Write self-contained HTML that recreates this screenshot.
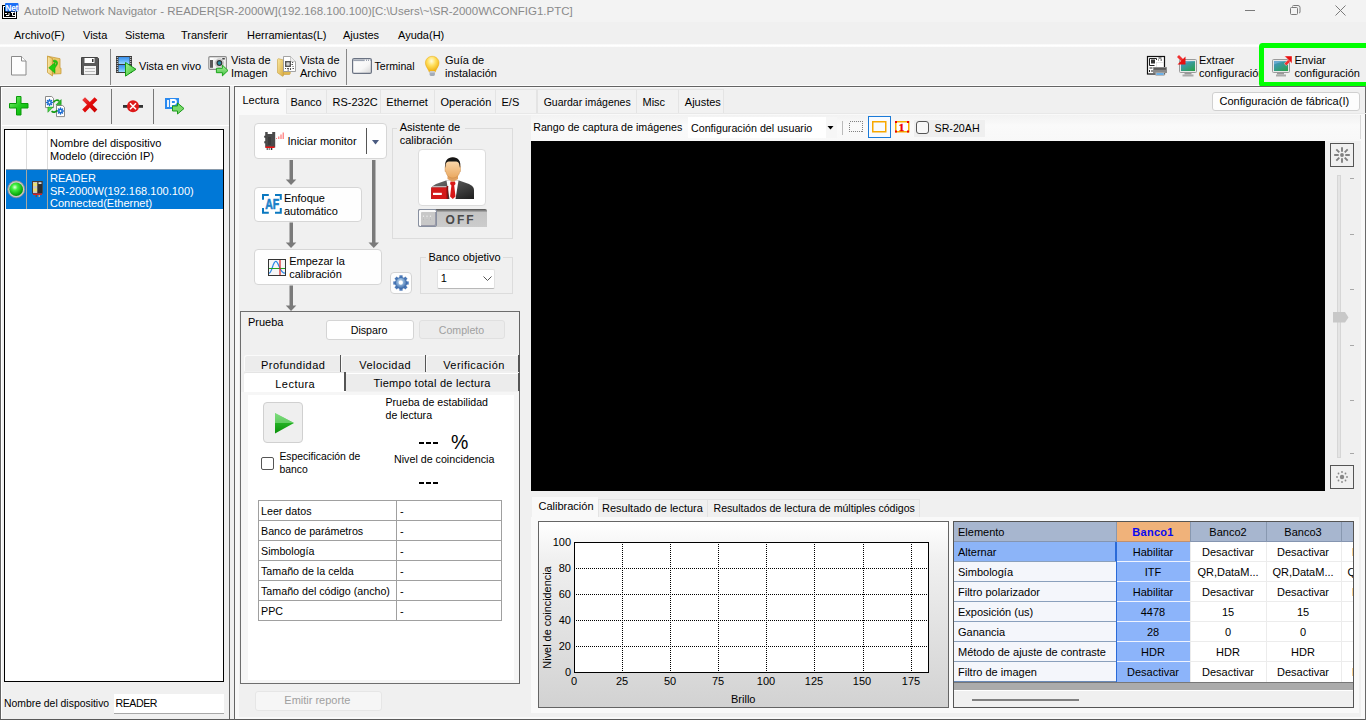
<!DOCTYPE html>
<html><head><meta charset="utf-8">
<style>
*{box-sizing:border-box;margin:0;padding:0}
html,body{width:1366px;height:720px;overflow:hidden;background:#f0f0f0;font-family:"Liberation Sans",sans-serif;font-size:11px;color:#000}
.a{position:absolute}
.t{position:absolute;white-space:nowrap;line-height:13px}
svg{position:absolute;overflow:visible}
</style></head><body>
<!-- TITLE BAR -->
<div class="a" style="left:0;top:0;width:1366px;height:22px;background:#f3f3f3"></div>
<svg style="left:2px;top:3px" width="17" height="17" viewBox="0 0 17 17">
<rect x="0.5" y="2.5" width="14" height="13" fill="#fff" stroke="#000"/>
<rect x="2" y="4" width="11" height="10" fill="#000"/>
<path d="M3 10.5h2M4 12.5h3M7 10v2.5M9 9.5h3.5M10.5 9.5v3h2.5" stroke="#fff" stroke-width="1"/>
<rect x="3" y="0" width="13.5" height="8.5" rx="1" fill="#1a6ef5"/>
<text x="3.6" y="7.5" font-size="8.2" font-weight="bold" fill="#fff" font-family="Liberation Sans" letter-spacing="-0.3">Net</text>
</svg>
<div class="t" style="left:24px;top:5px;font-size:11.5px;color:#8a8a8a">AutoID Network Navigator - READER[SR-2000W](192.168.100.100)[C:\Users\~\SR-2000W\CONFIG1.PTC]</div>
<svg style="left:1245px;top:10px" width="11" height="2"><rect x="0" y="0" width="10" height="1" fill="#7a7a7a"/></svg>
<svg style="left:1290px;top:5px" width="11" height="11"><path d="M2.5 1.5a1 1 0 0 1 1-1h4.5a2 2 0 0 1 2 2v4.5a1 1 0 0 1-1 1" fill="none" stroke="#7a7a7a"/><rect x="0.5" y="2.5" width="7" height="7" rx="1" fill="none" stroke="#7a7a7a"/></svg>
<svg style="left:1335px;top:5px" width="11" height="11"><path d="M0.5 0.5L10.5 10.5M10.5 0.5L0.5 10.5" stroke="#7a7a7a" stroke-width="1"/></svg>

<!-- MENU -->
<div class="t" style="left:14px;top:29px">Archivo(F)</div>
<div class="t" style="left:83px;top:29px">Vista</div>
<div class="t" style="left:125px;top:29px">Sistema</div>
<div class="t" style="left:181px;top:29px">Transferir</div>
<div class="t" style="left:247px;top:29px">Herramientas(L)</div>
<div class="t" style="left:343px;top:29px">Ajustes</div>
<div class="t" style="left:398px;top:29px">Ayuda(H)</div>

<!-- TOOLBAR -->
<div class="a" style="left:0;top:44px;width:1366px;height:3px;background:linear-gradient(#f6f6f6,#fff 40%,#fff 70%,#f8f8f8)"></div>
<div class="a" style="left:0;top:85px;width:1366px;height:1px;background:#fdfdfd"></div>
<!-- new doc -->
<svg style="left:11px;top:56px" width="16" height="20" viewBox="0 0 16 20"><path d="M0.5 0.5h10l4.5 4.5v14h-14.5z" fill="#fdfdfd" stroke="#8a8a8a"/><path d="M10.5 0.5v4.5h4.5" fill="#fff" stroke="#8a8a8a"/></svg>
<!-- open folder -->
<svg style="left:47px;top:55px" width="15" height="22" viewBox="0 0 15 22"><defs><linearGradient id="fd" x1="0" y1="0" x2="1" y2="0"><stop offset="0" stop-color="#fbe9a8"/><stop offset="1" stop-color="#e6c060"/></linearGradient></defs><path d="M0.5 1.2l12.5 2.5v9.5h1v5.5l-8.5 0.3z" fill="#ecc868" stroke="#c89a3a" stroke-width="0.8"/><path d="M0.5 1.2l5 2.3v17.5l-5-3.5z" fill="url(#fd)" stroke="#c89a3a" stroke-width="0.8"/><path d="M6.5 5.2c3.5-0.5 5 1.8 3.5 4.8l-2 3v5.3l-6.3-5.5 6.3-5.3v3l1-1.2c0.7-1.3 0.2-2.3-2.5-2.2z" fill="#22cc10" stroke="#129a08" stroke-width="0.5"/></svg>
<!-- floppy -->
<svg style="left:81px;top:57px" width="18" height="18" viewBox="0 0 18 18"><path d="M0.5 0.5h16l1 1v16h-17z" fill="#5a5a5a" stroke="#444"/><rect x="3.5" y="1" width="10" height="5" fill="#fff"/><rect x="11" y="2" width="1.5" height="3" fill="#333"/><rect x="3" y="9" width="12" height="8.5" fill="#f4f4f4"/><path d="M4 11.5h10M4 14.5h10" stroke="#bbb"/></svg>
<div class="a" style="left:110px;top:49px;width:1px;height:36px;background:#888"></div>
<!-- film -->
<svg style="left:116px;top:56px" width="21" height="21" viewBox="0 0 21 21"><defs><linearGradient id="fb" x1="0" y1="0" x2="0" y2="1"><stop offset="0" stop-color="#3a90ea"/><stop offset="0.5" stop-color="#60b0f8"/><stop offset="1" stop-color="#9ad8ff"/></linearGradient><linearGradient id="pg" x1="0" y1="0" x2="1" y2="1"><stop offset="0" stop-color="#a8f090"/><stop offset="1" stop-color="#30c030"/></linearGradient></defs><rect x="0" y="0" width="16" height="17" fill="#3a3a3a"/><rect x="2.5" y="1" width="11" height="7" fill="url(#fb)"/><rect x="2.5" y="9" width="11" height="7" fill="url(#fb)"/><g fill="#eee"><circle cx="1.3" cy="1.5" r="0.6"/><circle cx="1.3" cy="3.5" r="0.6"/><circle cx="1.3" cy="5.5" r="0.6"/><circle cx="1.3" cy="7.5" r="0.6"/><circle cx="1.3" cy="9.5" r="0.6"/><circle cx="1.3" cy="11.5" r="0.6"/><circle cx="1.3" cy="13.5" r="0.6"/><circle cx="1.3" cy="15.5" r="0.6"/><circle cx="14.7" cy="1.5" r="0.6"/><circle cx="14.7" cy="3.5" r="0.6"/><circle cx="14.7" cy="5.5" r="0.6"/><circle cx="14.7" cy="7.5" r="0.6"/></g><path d="M9.5 6.5l10.5 6.8-10.5 6.8z" fill="url(#pg)" stroke="#129a12" stroke-width="1" stroke-linejoin="round"/></svg>
<div class="t" style="left:139px;top:60.2px">Vista en vivo</div>
<!-- camera -->
<svg style="left:208px;top:55px" width="22" height="22" viewBox="0 0 22 22"><defs><linearGradient id="ag" x1="0" y1="0" x2="0" y2="1"><stop offset="0" stop-color="#b0f0a0"/><stop offset="1" stop-color="#40c040"/></linearGradient></defs><rect x="0.8" y="1.6" width="17.6" height="12.8" rx="1.2" fill="#f2f2f2" stroke="#8a8a8a" stroke-width="1.1"/><rect x="2" y="5" width="3" height="7.8" fill="#5a5a5a"/><rect x="2" y="3" width="3.5" height="1.8" fill="#fff"/><circle cx="11.4" cy="8.1" r="4.3" fill="#ddd" stroke="#aaa" stroke-width="0.6"/><circle cx="11.4" cy="8.1" r="3" fill="#333"/><circle cx="11.4" cy="8.1" r="1.8" fill="#2a8aa0"/><rect x="14.3" y="3" width="2.5" height="1.5" fill="#444"/><path d="M8.4 13.3h6v-3.2l5.6 5.4-5.6 5.4v-3.2h-6z" fill="url(#ag)" stroke="#10a010" stroke-width="0.9"/></svg>
<div class="t" style="left:231px;top:53.5px;line-height:13px">Vista de<br>Imagen</div>
<!-- folder file -->
<svg style="left:277px;top:56px" width="20" height="21" viewBox="0 0 20 21"><defs><linearGradient id="ff" x1="0" y1="0" x2="1" y2="1"><stop offset="0" stop-color="#fbe9a0"/><stop offset="1" stop-color="#d8aa40"/></linearGradient></defs><path d="M5 15.5h8c0.5 0 0.5 3-0.5 3h-7z" fill="#e0b850" stroke="#c09030" stroke-width="0.5"/><path d="M0.5 4c0-1 0.5-1.5 1.5-1.2l4.5 1.2v15.8l-1 0.5-5-3.5z" fill="url(#ff)" stroke="#c8a040" stroke-width="0.6"/><path d="M6.5 0.5h7l5 5v10h-12z" fill="#fff" stroke="#999" stroke-width="0.9"/><path d="M13.5 0.5v5h5" fill="#eee" stroke="#aaa" stroke-width="0.6"/><path d="M8 5h6v6h-6zM9.5 6.5v3h3v-3z" fill="#555" fill-rule="evenodd"/><rect x="10.5" y="7.5" width="1" height="1" fill="#555"/><path d="M15 6.5h1.2M14.5 8.5h1.5M15.5 10.5h1M8 12.5h1M10 12.5h2M13.5 12v2M15.5 12.5h1.5M10.5 14h1.5" stroke="#555" stroke-width="1.1"/></svg>
<div class="t" style="left:300px;top:53.5px">Vista de<br>Archivo</div>
<div class="a" style="left:346px;top:49px;width:1px;height:36px;background:#888"></div>
<!-- terminal -->
<svg style="left:352px;top:58px" width="21" height="17" viewBox="0 0 21 17"><defs><linearGradient id="tg" x1="0" y1="0" x2="1" y2="1"><stop offset="0" stop-color="#fff"/><stop offset="0.6" stop-color="#f6f6f6"/><stop offset="1" stop-color="#d4d4d4"/></linearGradient></defs><rect x="0.6" y="0.6" width="18.8" height="14.8" rx="1.5" fill="url(#tg)" stroke="#6a7282" stroke-width="1.2"/><path d="M1.2 2.3h11.5" stroke="#9aa2b0" stroke-width="1.6"/><path d="M14 2.3h1M16 2.3h1M18 2.3h0.8" stroke="#9aa2b0" stroke-width="1.6"/></svg>
<div class="t" style="left:374.5px;top:60.2px;font-size:10.6px">Terminal</div>
<!-- bulb -->
<svg style="left:425px;top:56px" width="15" height="21" viewBox="0 0 15 21"><defs><radialGradient id="bg1" cx="0.45" cy="0.3" r="0.65"><stop offset="0" stop-color="#fffce0"/><stop offset="0.45" stop-color="#ffe060"/><stop offset="1" stop-color="#f0b010"/></radialGradient></defs><path d="M7.2 0.3c3.8 0 6.8 2.9 6.8 6.6 0 3-2 5-3.2 7.6l-0.6 1.6h-6l-0.6-1.6c-1.2-2.6-3.2-4.6-3.2-7.6 0-3.7 3-6.6 6.8-6.6z" fill="url(#bg1)" stroke="#e8a810" stroke-width="0.5"/><rect x="4.6" y="15.3" width="5.3" height="4.6" rx="1.3" fill="#a4acb8"/><rect x="4.6" y="15.3" width="5.3" height="1.2" fill="#d8dce4"/></svg>
<div class="t" style="left:445px;top:53.5px">Guía de<br>instalación</div>
<!-- qr printer -->
<svg style="left:1146px;top:55px" width="22" height="22" viewBox="0 0 22 22"><rect x="1.5" y="1.5" width="17" height="17.5" fill="#fff" stroke="#111" stroke-width="1.2"/><path d="M3.5 10.5v-7h7v1.5" fill="none" stroke="#222" stroke-width="1"/><rect x="5" y="4.5" width="4" height="4" fill="#333"/><path d="M3.5 10.5h5" stroke="#222"/><path d="M12.5 3h3M12 5h0.8M14.5 5h1.5M3.5 13h3M3.5 15v2M6 15v2" stroke="#222" stroke-width="1"/><rect x="10.5" y="7.5" width="7" height="5" fill="#fff" stroke="#ccc" stroke-width="0.5"/><rect x="7" y="12" width="14" height="6" rx="0.5" fill="#8a8a8a"/><rect x="8" y="13" width="12" height="1.8" fill="#5a5a5a"/><rect x="9.5" y="17.5" width="9" height="3.5" fill="#bbb"/><rect x="10.5" y="18" width="7" height="2" fill="#6ab0e8"/></svg>
<!-- extraer -->
<svg style="left:1177px;top:55px" width="21" height="22" viewBox="0 0 21 22"><defs><linearGradient id="mg" x1="0" y1="0" x2="0.8" y2="1"><stop offset="0" stop-color="#4a90d0"/><stop offset="0.45" stop-color="#3a9a9a"/><stop offset="1" stop-color="#2aa050"/></linearGradient></defs><rect x="2.5" y="4.5" width="17" height="13" rx="1" fill="#e8e8e8" stroke="#9a9a9a"/><rect x="4" y="6" width="14" height="10" fill="url(#mg)"/><path d="M4 9.5c4-2 9-3 14-3v-0.5h-14z" fill="#8ac0e0" opacity="0.5"/><rect x="7.5" y="18" width="7" height="1.5" fill="#999"/><rect x="5.5" y="19.5" width="11" height="2" fill="#aaa"/><path d="M0 2l2-2 4.5 4.5-2 2z" fill="#f03030"/><path d="M8.5 1.5v8h-8z" fill="#e81010"/></svg>
<div class="a" style="left:1199px;top:46px;width:61px;height:40px;overflow:hidden"><div class="t" style="left:0;top:7.5px">Extraer<br>configuración</div></div>
<!-- highlight -->
<div class="a" style="left:1259px;top:43.3px;width:112px;height:44.2px;border:5.6px solid #00ff00;border-radius:3.5px"></div>
<!-- enviar -->
<svg style="left:1271px;top:55px" width="22" height="22" viewBox="0 0 22 22"><rect x="1.5" y="4.5" width="17" height="13" rx="1" fill="#e8e8e8" stroke="#9a9a9a"/><rect x="3" y="6" width="14" height="10" fill="url(#mg)"/><path d="M3 9.5c4-2 9-3 14-3v-0.5h-14z" fill="#8ac0e0" opacity="0.5"/><rect x="6" y="18" width="7" height="1.5" fill="#999"/><rect x="5" y="19.5" width="10" height="2" fill="#aaa"/><path d="M13.2 8.6l4.3-4.3 2.1 2.1-4.3 4.3z" fill="#f03030" stroke="#fff" stroke-width="0.4"/><path d="M13.5 1h7.5v7.5z" fill="#e81010" stroke="#fff" stroke-width="0.4"/></svg>
<div class="t" style="left:1294.5px;top:53.5px">Enviar<br>configuración</div>

<!-- LEFT PANEL -->
<div class="a" style="left:0;top:86px;width:230px;height:634px;border-left:1px solid #646464;border-top:1px solid #646464;border-right:1px solid #646464;"></div>
<div class="a" style="left:1px;top:87px;width:228px;height:1px;background:#fff"></div>
<div class="a" style="left:1px;top:87px;width:1px;height:633px;background:#fff"></div>
<!-- left toolbar -->
<svg style="left:9px;top:96px" width="20" height="20" viewBox="0 0 20 20"><defs><linearGradient id="gp" x1="0" y1="0" x2="1" y2="1"><stop offset="0" stop-color="#8ff07a"/><stop offset="0.5" stop-color="#22cc22"/><stop offset="1" stop-color="#00b000"/></linearGradient></defs><path d="M7.5 0.5h4.5v7h7v4.5h-7v7h-4.5v-7h-7v-4.5h7z" fill="url(#gp)" stroke="#0a9a0a"/></svg>
<svg style="left:45px;top:96px" width="21" height="21" viewBox="0 0 21 21"><path d="M0.5 0.5h6.2l1.8 1.8v9.3h-8z" fill="#fff" stroke="#8a8a8a"/><path d="M11.5 9.5h6.2l1.8 1.8v9.3h-8z" fill="#fff" stroke="#8a8a8a"/><g stroke="#1a6ad0" stroke-width="1.5" stroke-linecap="round"><path d="M4.5 3.6v5.8M1.6 6.5h5.8M2.5 4.5l4 4M6.5 4.5l-4 4"/><path d="M15.5 12.1v5.8M12.6 15h5.8M13.5 13l4 4M17.5 13l-4 4"/></g><circle cx="4.5" cy="6.5" r="0.9" fill="#fff"/><circle cx="15.5" cy="15" r="0.9" fill="#fff"/><path d="M8.6 6.2c1.5-2.2 4-2.6 5.6-1" stroke="#139a13" stroke-width="1.7" fill="none"/><path d="M16.2 3.6v5.2h-5.2z" fill="#2ab82a" stroke="#0a8a0a" stroke-width="0.5"/><path d="M12.2 14.2c-1.5 2.2-4 2.6-5.6 1" stroke="#139a13" stroke-width="1.7" fill="none"/><path d="M2.9 11.1h5.2l-5.2 5.2z" fill="#4ad84a" stroke="#0a8a0a" stroke-width="0.5"/></svg>
<svg style="left:82px;top:97px" width="16" height="16" viewBox="0 0 16 16"><defs><linearGradient id="xr" x1="0" y1="0" x2="1" y2="1"><stop offset="0" stop-color="#f04848"/><stop offset="0.5" stop-color="#e00a0a"/><stop offset="1" stop-color="#c80000"/></linearGradient></defs><path d="M0.2 3l2.8-2.8 4.8 4.8 4.8-4.8 2.8 2.8-4.8 4.8 4.8 4.8-2.8 2.8-4.8-4.8-4.8 4.8-2.8-2.8 4.8-4.8z" fill="url(#xr)"/></svg>
<div class="a" style="left:111px;top:89px;width:1px;height:35px;background:#777"></div>
<svg style="left:122px;top:99px" width="22" height="14" viewBox="0 0 22 14"><rect x="1" y="6" width="20" height="2.8" fill="#333"/><circle cx="11" cy="7.2" r="6" fill="#dd1a1a"/><path d="M8 4.2l6 6M14 4.2l-6 6" stroke="#fff" stroke-width="1.5"/></svg>
<div class="a" style="left:153px;top:89px;width:1px;height:35px;background:#777"></div>
<svg style="left:165px;top:97px" width="20" height="19" viewBox="0 0 20 19"><rect x="0" y="1" width="14" height="11" fill="#2a8af0"/><path d="M3 3v7M6 10v-7h3a2 2 0 0 1 0 4h-3" stroke="#fff" stroke-width="1.8" fill="none"/><path d="M7.5 9h5v-3l6.5 5.5-6.5 5.5v-3h-5z" fill="#7ad86a" stroke="#1a9a1a"/></svg>
<div class="a" style="left:1px;top:125px;width:228px;height:1px;background:#fff"></div>
<!-- list -->
<div class="a" style="left:4px;top:129px;width:220px;height:553px;border:1px solid #000;background:#fff"></div>
<div class="a" style="left:26px;top:130px;width:1px;height:39px;background:#dcdcdc"></div>
<div class="a" style="left:47px;top:130px;width:1px;height:39px;background:#dcdcdc"></div>
<div class="a" style="left:6px;top:169px;width:217px;height:40px;background:#0078d7"></div>
<div class="a" style="left:26px;top:169px;width:1px;height:40px;background:#a8a8a0"></div>
<div class="a" style="left:47px;top:169px;width:1px;height:40px;background:#a8a8a0"></div>
<div class="a" style="left:6px;top:169px;width:217px;height:1px;background:#8a9aaa"></div>
<div class="t" style="left:50px;top:136.5px;line-height:13px">Nombre del dispositivo<br>Modelo (dirección IP)</div>
<div class="t" style="left:50px;top:172px;line-height:12.7px;color:#fff">READER<br>SR-2000W(192.168.100.100)<br>Connected(Ethernet)</div>
<svg style="left:7px;top:180px" width="19" height="19" viewBox="0 0 19 19"><defs><radialGradient id="gb" cx="0.4" cy="0.35" r="0.6"><stop offset="0" stop-color="#e8ffe0"/><stop offset="0.35" stop-color="#40f040"/><stop offset="1" stop-color="#08a008"/></radialGradient></defs><circle cx="9.2" cy="9.3" r="8.5" fill="#c8c8c8" stroke="#888" stroke-width="0.8"/><circle cx="9.2" cy="9.3" r="6.8" fill="url(#gb)"/></svg>
<svg style="left:32px;top:181px" width="11" height="17" viewBox="0 0 11 17"><rect x="0" y="0" width="10.7" height="12.7" fill="#4a3a30"/><rect x="1" y="1" width="4.5" height="11" fill="#c8c8c8"/><rect x="1.3" y="2" width="3.8" height="3" fill="#e8e070"/><rect x="1.3" y="7.5" width="3.8" height="3" fill="#e8e070"/><rect x="5.5" y="0.8" width="4.5" height="11.2" fill="#2e2e2e"/><rect x="6.5" y="1.2" width="3" height="1.8" fill="#ddd"/><rect x="1" y="12.5" width="9" height="1.5" fill="#d82020"/><rect x="3.5" y="14" width="1.5" height="2" fill="#6a5040"/><rect x="6.5" y="14" width="1.5" height="2" fill="#c0a890"/></svg>
<div class="t" style="left:4px;top:697px;font-size:10.4px">Nombre del dispositivo</div>
<div class="a" style="left:114px;top:694px;width:110px;height:20px;background:#fff;border-bottom:1px solid #a8a8a8"></div>
<div class="t" style="left:115.5px;top:697px;font-size:10.6px;letter-spacing:-0.45px">READER</div>

<!-- MAIN PANEL -->
<div class="a" style="left:0;top:719px;width:1366px;height:1px;background:#5a5a5a"></div>
<div class="a" style="left:234px;top:86px;width:1132px;height:634px;border-left:1px solid #646464;border-top:1px solid #646464;"></div>
<div class="a" style="left:235px;top:87px;width:1130px;height:1px;background:#f8f8f8"></div>
<!-- page light frame -->
<div class="a" style="left:235px;top:113px;width:1130px;height:606px;background:#f9f9f9"></div>
<div class="a" style="left:239px;top:115px;width:1122px;height:602px;background:#f0f0f0"></div>
<div class="a" style="left:1365px;top:86px;width:1px;height:634px;background:#6a6a6a"></div>
<!-- tabs -->
<div class="a" style="left:286px;top:89.3px;width:251.3px;height:24.2px;background:#f2f2f2;border:1px solid #e4e4e4;border-bottom:0"></div>
<div class="a" style="left:537.3px;top:89.3px;width:187px;height:24.2px;background:#f2f2f2;border:1px solid #e4e4e4;border-bottom:0"></div>
<div class="a" style="left:326px;top:89.3px;width:1px;height:24px;background:#e4e4e4"></div>
<div class="a" style="left:380px;top:89.3px;width:1px;height:24px;background:#e4e4e4"></div>
<div class="a" style="left:434px;top:89.3px;width:1px;height:24px;background:#e4e4e4"></div>
<div class="a" style="left:495px;top:89.3px;width:1px;height:24px;background:#e4e4e4"></div>
<div class="a" style="left:636px;top:89.3px;width:1px;height:24px;background:#e4e4e4"></div>
<div class="a" style="left:678px;top:89.3px;width:1px;height:24px;background:#e4e4e4"></div>
<div class="a" style="left:235px;top:113px;width:1131px;height:1px;background:#e8e8e8"></div>
<div class="a" style="left:235px;top:88px;width:51px;height:27px;background:#f9f9f9"></div>
<div class="t" style="left:242.5px;top:93.5px">Lectura</div>
<div class="t" style="left:290.5px;top:96.2px">Banco</div>
<div class="t" style="left:332.5px;top:96.2px">RS-232C</div>
<div class="t" style="left:386.3px;top:96.2px">Ethernet</div>
<div class="t" style="left:440.5px;top:96.2px">Operación</div>
<div class="t" style="left:501.5px;top:96.2px">E/S</div>
<div class="t" style="left:543.7px;top:96.2px;font-size:10.5px">Guardar imágenes</div>
<div class="t" style="left:642.5px;top:96.2px">Misc</div>
<div class="t" style="left:684.8px;top:96.2px">Ajustes</div>
<div class="a" style="left:1211.5px;top:91.5px;width:148px;height:19.5px;background:#fdfdfd;border:1px solid #d0d0d0;border-radius:3px"></div>
<div class="t" style="left:1219.5px;top:94.5px">Configuración de fábrica(I)</div>

<!-- LECTURA TOP -->
<div class="a" style="left:254px;top:123px;width:133px;height:36px;background:#fefefe;border:1px solid #d6d6d6;border-radius:4px"></div>
<svg style="left:264px;top:131px" width="22" height="20" viewBox="0 0 22 20"><path d="M1.2 1h2.5v2h4.5v-2h3v15.5h-10z" fill="#4a4a4a"/><rect x="0.3" y="4.5" width="1.5" height="2.5" rx="0.7" fill="#3a3a3a"/><rect x="0.3" y="10" width="1.5" height="2.5" rx="0.7" fill="#3a3a3a"/><rect x="4" y="6" width="3" height="8" fill="#3c3c3c"/><rect x="1.5" y="15.5" width="9" height="1.5" fill="#f01010"/><rect x="2.7" y="17" width="1" height="2" fill="#333"/><rect x="4.7" y="17" width="1" height="2" fill="#555"/><rect x="6.8" y="17" width="1.5" height="2" fill="#333"/><path d="M12.5 8v-0.8M14.8 8v-2.5M17 8v-4.5M19.2 8v-6.5" stroke="#ff5a5a" stroke-width="1"/></svg>
<div class="t" style="left:287.5px;top:134.8px">Iniciar monitor</div>
<div class="a" style="left:366px;top:128px;width:1px;height:26px;background:#555"></div>
<svg style="left:372px;top:139.5px" width="8" height="5"><path d="M0 0h7l-3.5 4.5z" fill="#4a5a80"/></svg>
<!-- arrows -->
<svg style="left:285px;top:159px" width="12" height="27"><rect x="4.5" y="1" width="3.5" height="20" fill="#7a7a7a"/><path d="M0.8 20.5h10.5l-5.25 5.5z" fill="#7a7a7a"/></svg>
<svg style="left:285px;top:222px" width="12" height="27"><rect x="4.5" y="0.5" width="3.5" height="21" fill="#7a7a7a"/><path d="M0.8 20.5h10.5l-5.25 5.5z" fill="#7a7a7a"/></svg>
<svg style="left:285px;top:285px" width="12" height="27"><rect x="4.5" y="0.5" width="3.5" height="21" fill="#7a7a7a"/><path d="M0.8 20.5h10.5l-5.25 5.5z" fill="#7a7a7a"/></svg>
<svg style="left:367.5px;top:159px" width="12" height="90"><rect x="4" y="1" width="3.5" height="84" fill="#7a7a7a"/><path d="M0.5 83.5h10.5l-5.25 5.5z" fill="#7a7a7a"/></svg>
<div class="a" style="left:254px;top:186.5px;width:107.5px;height:35px;background:#fefefe;border:1px solid #d6d6d6;border-radius:4px"></div>
<svg style="left:262px;top:194px" width="20" height="20" viewBox="0 0 20 20"><path d="M1 5.8V1h5.8M13 1h5.8v4.8M18.8 14V18.8h-5.8M6.8 18.8H1V14" stroke="#0a78c0" stroke-width="2" fill="none"/><text x="3.2" y="14.7" font-size="14.2" font-weight="bold" fill="#1a80c8" stroke="#1a80c8" stroke-width="0.6" font-family="Liberation Sans" textLength="14" lengthAdjust="spacingAndGlyphs">AF</text></svg>
<div class="t" style="left:284px;top:191.7px">Enfoque<br>automático</div>
<div class="a" style="left:254px;top:249.3px;width:127.5px;height:35.3px;background:#fefefe;border:1px solid #d6d6d6;border-radius:4px"></div>
<svg style="left:268px;top:259px" width="18" height="17" viewBox="0 0 18 17"><rect x="0.5" y="0.5" width="17" height="16" fill="#f6f6f6" stroke="#333"/><path d="M1 14.2C4 14.2 4.8 2.3 7.8 2.3S11.5 14.2 17 14.2" stroke="#2a88e8" stroke-width="1.2" fill="none"/><path d="M1 9.5h16" stroke="#20a020" stroke-width="1"/><path d="M12 1v15" stroke="#e02020" stroke-width="1.2"/></svg>
<div class="t" style="left:289.2px;top:254.6px">Empezar la<br>calibración</div>
<div class="a" style="left:390px;top:272px;width:21.5px;height:21.5px;background:#fdfdfd;border:1px solid #d4d4d4;border-radius:4px"></div>
<svg style="left:393px;top:275px" width="16" height="16" viewBox="0 0 16 16"><defs><radialGradient id="gg" cx="0.45" cy="0.4" r="0.6"><stop offset="0" stop-color="#f0f6fc"/><stop offset="0.45" stop-color="#8ab0d8"/><stop offset="1" stop-color="#3a68a8"/></radialGradient></defs><g fill="#4a78b8"><rect x="6.4" y="0.3" width="3.2" height="3"/><rect x="6.4" y="12.7" width="3.2" height="3"/><rect x="0.3" y="6.4" width="3" height="3.2"/><rect x="12.7" y="6.4" width="3" height="3.2"/><rect x="6.4" y="0.3" width="3.2" height="3" transform="rotate(45 8 8)"/><rect x="6.4" y="12.7" width="3.2" height="3" transform="rotate(45 8 8)"/><rect x="0.3" y="6.4" width="3" height="3.2" transform="rotate(45 8 8)"/><rect x="12.7" y="6.4" width="3" height="3.2" transform="rotate(45 8 8)"/></g><circle cx="8" cy="8" r="5.6" fill="url(#gg)" stroke="#3a68a8" stroke-width="0.7"/><circle cx="7.8" cy="7.7" r="2.1" fill="#fff"/></svg>
<!-- asistente group -->
<div class="a" style="left:391.5px;top:127.5px;width:121.5px;height:111px;border:1px solid #dcdcdc"></div>
<div class="a" style="left:397px;top:120px;width:68px;height:26px;background:#f0f0f0"></div>
<div class="t" style="left:399.7px;top:120.7px">Asistente de<br>calibración</div>
<div class="a" style="left:418.3px;top:149.2px;width:68px;height:57px;background:#fff;border:1px solid #dcdcdc;border-radius:4px"></div>
<svg style="left:425px;top:150px" width="55" height="55" viewBox="0 0 55 55"><defs><linearGradient id="sk" x1="0" y1="0" x2="0" y2="1"><stop offset="0" stop-color="#fde0b8"/><stop offset="1" stop-color="#eaa860"/></linearGradient><linearGradient id="su" x1="0" y1="0" x2="1" y2="1"><stop offset="0" stop-color="#707070"/><stop offset="1" stop-color="#1e1e1e"/></linearGradient></defs>
<path d="M6 49v-9c0-3 2-4.5 5-6l10-3.5h13l10 3.5c3 1.5 5 3 5 6v9z" fill="url(#su)"/>
<path d="M21.5 30.5h12l-3 18.5h-6z" fill="#fff"/>
<path d="M25.5 31.5h4.5l0.5 2.5-1.3 1.5 1.3 11-2.7 2.5-2.7-2.5 1.3-11-1.3-1.5z" fill="#d81818"/>
<path d="M22.5 24v5l5.3 3 5.2-3v-5z" fill="#e0a060"/>
<path d="M20.5 16.5c0-6 3-8.5 7.3-8.5s7.2 2.5 7.2 8.5l0.5 0v5h-0.7c-0.5 4-3.5 6.5-7 6.5s-6.5-2.5-7-6.5h-0.8v-5z" fill="url(#sk)" stroke="#c08040" stroke-width="0.4"/>
<path d="M20.2 18c-1-7 2.5-10.8 7.6-10.8s8.8 3.8 7.2 10.8l-0.8-4c-0.5-1.5-1.5-2.5-3-2.5h-7.5c-1.5 0-2.5 1-3 2.5z" fill="#151515"/>
<rect x="6.2" y="37.2" width="16.5" height="11.8" fill="#d41a1a"/><path d="M6.2 37.2l2-1.2h15.5l-1 1.2z" fill="#bbb"/><rect x="21.5" y="36" width="1.7" height="13" fill="#8a1010"/><rect x="8" y="42.8" width="8.8" height="2.2" fill="#fff"/>
</svg>
<div class="a" style="left:418px;top:209.2px;width:69px;height:17.5px;background:linear-gradient(#505050,#909090 2px,#c4c4c4 3.5px,#cccccc);border-radius:2px 2px 0 0"></div>
<div class="a" style="left:418px;top:209.2px;width:18.6px;height:17.5px;background:#c8c8c8;border:1px solid #8890a0;border-radius:2px;box-shadow:inset 2px 2px 0 #fafafa, inset -1px -1px 0 #9a9aa8"></div>
<svg style="left:422px;top:215px" width="10" height="6"><path d="M1.5 0.5v4M5 0.5v4M8.5 0.5v4" stroke="#e8e8e8" stroke-width="1.2"/><path d="M1.5 2v3M5 2v3M8.5 2v3" stroke="#aaa" stroke-width="0.6"/></svg>
<div class="t" style="left:445.5px;top:213.5px;font-weight:bold;font-size:12px;letter-spacing:2.1px;color:#4a4a4a">OFF</div>
<!-- banco objetivo -->
<div class="a" style="left:420.4px;top:257.3px;width:92.3px;height:37px;border:1px solid #dcdcdc"></div>
<div class="a" style="left:426px;top:250px;width:77px;height:14px;background:#f0f0f0"></div>
<div class="t" style="left:428.5px;top:250.5px">Banco objetivo</div>
<div class="a" style="left:436.7px;top:268.7px;width:58.6px;height:20px;background:#fff;border:1px solid #e2e2e2;border-bottom:1px solid #b8b8b8;border-radius:2px"></div>
<div class="t" style="left:440.7px;top:272.4px">1</div>
<svg style="left:483px;top:276px" width="9" height="5"><path d="M0.5 0.5l4 4 4-4" stroke="#555" fill="none"/></svg>

<!-- PRUEBA -->
<div class="a" style="left:240px;top:311px;width:280px;height:373px;border:1px solid #6e6e6e;border-right-color:#646464"></div>
<div class="t" style="left:248px;top:315.6px">Prueba</div>
<div class="a" style="left:326px;top:319.5px;width:87.5px;height:20px;background:#fefefe;border:1px solid #d4d4d4;border-radius:3px"></div>
<div class="t" style="left:350.7px;top:323.7px;font-size:10.7px">Disparo</div>
<div class="a" style="left:418.8px;top:320.3px;width:86px;height:19px;background:#ececec;border:1px solid #e0e0e0;border-radius:3px"></div>
<div class="t" style="left:438.8px;top:323.7px;color:#a0a0a0;font-size:10.6px">Completo</div>
<!-- sub tabs row1 -->
<div class="a" style="left:244px;top:355px;width:96px;height:16px;background:#ececec;border-top:1px solid #fafafa;border-left:1px solid #fafafa;border-radius:3px 0 0 0"></div>
<div class="a" style="left:341px;top:355px;width:84px;height:16px;background:#ececec;border-top:1px solid #fafafa;border-left:1px solid #fafafa;border-radius:3px 0 0 0"></div>
<div class="a" style="left:426px;top:355px;width:93px;height:16px;background:#ececec;border-top:1px solid #fafafa;border-left:1px solid #fafafa;border-radius:3px 0 0 0"></div>
<div class="a" style="left:339.5px;top:355px;width:1.5px;height:17px;background:#555"></div>
<div class="a" style="left:424.5px;top:355px;width:1.5px;height:17px;background:#555"></div>
<div class="a" style="left:518px;top:355px;width:1.5px;height:17px;background:#555"></div>
<div class="t" style="left:261px;top:359px;letter-spacing:0.45px">Profundidad</div>
<div class="t" style="left:359.3px;top:359px;letter-spacing:0.45px">Velocidad</div>
<div class="t" style="left:443.2px;top:359px;letter-spacing:0.45px">Verificación</div>
<!-- row2 -->
<div class="a" style="left:345px;top:373px;width:174.5px;height:18px;background:#ececec;border-top:1px solid #fff"></div>
<div class="a" style="left:518px;top:373px;width:1.5px;height:18px;background:#555"></div>
<div class="a" style="left:242.5px;top:371.5px;width:103px;height:20.5px;background:#fff;border-top:1px solid #e4e4e4;border-left:1px solid #eee;border-radius:3px 0 0 0"></div>
<div class="a" style="left:344px;top:372px;width:1.5px;height:19px;background:#555"></div>
<div class="t" style="left:275.3px;top:377.8px;letter-spacing:0.45px">Lectura</div>
<div class="t" style="left:373.5px;top:376.6px;letter-spacing:0.25px">Tiempo total de lectura</div>
<!-- sub content -->
<div class="a" style="left:241px;top:391.5px;width:278px;height:291.5px;background:#f6f6f6"></div>
<div class="a" style="left:248px;top:394.5px;width:266px;height:285px;background:#fff"></div>
<div class="a" style="left:262.5px;top:402.3px;width:40px;height:40.5px;background:#efefef;border:1px solid #d0d0d0;border-radius:4px"></div>
<svg style="left:274px;top:412px" width="21" height="22" viewBox="0 0 21 22"><defs><linearGradient id="pl" x1="0" y1="0" x2="0" y2="1"><stop offset="0" stop-color="#6ad86a"/><stop offset="0.5" stop-color="#22b022"/><stop offset="1" stop-color="#0a900a"/></linearGradient></defs><path d="M1 1l19 10-19 10.5z" fill="url(#pl)"/><path d="M1 1l19 10h-19z" fill="#8ae08a" opacity="0.6"/></svg>
<div class="t" style="left:385.5px;top:395.5px;font-size:10.6px;line-height:13px">Prueba de estabilidad<br>de lectura</div>
<div class="a" style="left:419px;top:441.5px;width:5px;height:2px;background:#000"></div>
<div class="a" style="left:426px;top:441.5px;width:5px;height:2px;background:#000"></div>
<div class="a" style="left:433px;top:441.5px;width:5px;height:2px;background:#000"></div>
<div class="t" style="left:451px;top:431.5px;font-size:19.5px;line-height:20px">%</div>
<div class="t" style="left:394px;top:452.5px;font-size:10.7px">Nivel de coincidencia</div>
<div class="a" style="left:419px;top:481.5px;width:5px;height:2px;background:#000"></div>
<div class="a" style="left:426px;top:481.5px;width:5px;height:2px;background:#000"></div>
<div class="a" style="left:433px;top:481.5px;width:5px;height:2px;background:#000"></div>
<div class="a" style="left:261px;top:457px;width:13px;height:13px;background:#fff;border:1px solid #555;border-radius:2px"></div>
<div class="t" style="left:279.4px;top:451.3px;font-size:10.4px;line-height:12.5px">Especificación de<br>banco</div>
<!-- results table -->
<div class="a" style="left:258px;top:500px;width:244px;height:121px;border:1px solid #a0a0a0"></div>
<div class="a" style="left:396px;top:500px;width:1px;height:121px;background:#a0a0a0"></div>
<div class="a" style="left:258px;top:520px;width:244px;height:1px;background:#a0a0a0"></div>
<div class="a" style="left:258px;top:540px;width:244px;height:1px;background:#a0a0a0"></div>
<div class="a" style="left:258px;top:560px;width:244px;height:1px;background:#a0a0a0"></div>
<div class="a" style="left:258px;top:580px;width:244px;height:1px;background:#a0a0a0"></div>
<div class="a" style="left:258px;top:600px;width:244px;height:1px;background:#a0a0a0"></div>
<div class="t" style="left:261px;top:504.5px;font-size:10.7px">Leer datos</div>
<div class="t" style="left:261px;top:524.5px;font-size:10.7px">Banco de parámetros</div>
<div class="t" style="left:261px;top:544.5px;font-size:10.7px">Simbología</div>
<div class="t" style="left:261px;top:564.5px;font-size:10.7px">Tamaño de la celda</div>
<div class="t" style="left:261px;top:584.5px;font-size:10.7px">Tamaño del código (ancho)</div>
<div class="t" style="left:261px;top:604.5px;font-size:10.7px">PPC</div>
<div class="t" style="left:400px;top:504.5px">-</div>
<div class="t" style="left:400px;top:524.5px">-</div>
<div class="t" style="left:400px;top:544.5px">-</div>
<div class="t" style="left:400px;top:564.5px">-</div>
<div class="t" style="left:400px;top:584.5px">-</div>
<div class="t" style="left:400px;top:604.5px">-</div>
<div class="a" style="left:254.5px;top:690.5px;width:127px;height:20px;background:#f6f6f6;border:1px solid #e6e6e6;border-radius:3px"></div>
<div class="t" style="left:284.3px;top:694.4px;color:#a0a0a0">Emitir reporte</div>

<!-- IMAGE AREA -->
<div class="a" style="left:531px;top:114.5px;width:830px;height:26px;background:linear-gradient(#f2f2f2,#fafafa 40%,#f8f8f8)"></div>
<div class="a" style="left:1360px;top:115px;width:1px;height:24px;background:#d8d8d8"></div>
<div class="t" style="left:533.2px;top:121px;font-size:10.7px">Rango de captura de imágenes</div>
<div class="a" style="left:688px;top:117px;width:149px;height:20.5px;background:#fff"></div>
<div class="a" style="left:826px;top:117px;width:11px;height:20.5px;background:#f6f6f6"></div>
<div class="t" style="left:691px;top:121.7px;font-size:10.7px">Configuración del usuario</div>
<svg style="left:827px;top:126px" width="8" height="5"><path d="M0.5 0h6l-3 3.5z" fill="#000"/></svg>
<div class="a" style="left:842px;top:120.5px;width:1px;height:14.5px;background:#bbb"></div>
<svg style="left:849px;top:121px" width="15" height="12" shape-rendering="crispEdges"><rect x="0.5" y="0.5" width="13" height="10" fill="none" stroke="#808080" stroke-dasharray="1 1"/></svg>
<div class="a" style="left:868px;top:116px;width:23px;height:22px;background:#f8fbff;border:1px solid #1a7ad8"></div>
<svg style="left:872px;top:121px" width="15" height="12"><rect x="0.75" y="0.75" width="13" height="10" fill="none" stroke="#f8a800" stroke-width="1.5"/></svg>
<svg style="left:895px;top:121px" width="15" height="12"><rect x="0.75" y="0.75" width="13" height="10" fill="#fff" stroke="#f8b000" stroke-width="1.5"/><rect x="0" y="0" width="2" height="2" fill="#e00"/><rect x="12" y="0" width="2" height="2" fill="#e00"/><rect x="0" y="9.5" width="2" height="2" fill="#e00"/><rect x="12" y="9.5" width="2" height="2" fill="#e00"/><text x="3.8" y="9.8" font-size="11" font-weight="bold" fill="#e00" stroke="#e00" stroke-width="0.4" font-family="Liberation Serif">1</text></svg>
<div class="a" style="left:914px;top:120px;width:71px;height:17px;background:#efefef"></div>
<div class="a" style="left:916px;top:121.2px;width:13px;height:12.5px;background:#f8f8f8;border:1px solid #555;border-radius:3px"></div>
<div class="t" style="left:934.5px;top:121.9px;font-size:10.7px">SR-20AH</div>
<div class="a" style="left:531px;top:141px;width:794px;height:350px;background:#000"></div>
<!-- zoom controls -->
<div class="a" style="left:1330px;top:143px;width:24px;height:24px;border:1px solid #555;background:#f0f0f0"></div>
<svg style="left:1334px;top:147px" width="16" height="16" viewBox="0 0 16 16"><g stroke="#808080" stroke-width="1.9"><path d="M8 0.2v4.5M8 11.3v4.5M0.2 8h4.5M11.3 8h4.5M2.3 2.3l3 3M10.7 10.7l3 3M13.7 2.3l-3 3M5.3 10.7l-3 3"/></g><circle cx="8" cy="8" r="1.9" fill="#808080"/></svg>
<div class="a" style="left:1337px;top:174.5px;width:3.5px;height:283px;background:#e4e4e4;border:1px solid #d6d6d6"></div>
<div class="a" style="left:1350px;top:178px;width:4px;height:1px;background:#a8a8a8"></div>
<div class="a" style="left:1350px;top:234px;width:4px;height:1px;background:#a8a8a8"></div>
<div class="a" style="left:1350px;top:289px;width:4px;height:1px;background:#a8a8a8"></div>
<div class="a" style="left:1350px;top:345px;width:4px;height:1px;background:#a8a8a8"></div>
<div class="a" style="left:1350px;top:400px;width:4px;height:1px;background:#a8a8a8"></div>
<div class="a" style="left:1350px;top:453px;width:4px;height:1px;background:#a8a8a8"></div>
<svg style="left:1333px;top:312px" width="16" height="11"><path d="M0 0h12l3.5 5.5-3.5 5h-12z" fill="#c8c8c8"/></svg>
<div class="a" style="left:1330px;top:465px;width:24px;height:24px;border:1px solid #555;background:#f0f0f0"></div>
<svg style="left:1334px;top:469px" width="16" height="16" viewBox="0 0 16 16"><g fill="#888"><circle cx="8" cy="8" r="2.2"/><circle cx="8" cy="3" r="0.9"/><circle cx="8" cy="13" r="0.9"/><circle cx="3" cy="8" r="0.9"/><circle cx="13" cy="8" r="0.9"/><circle cx="4.5" cy="4.5" r="0.9"/><circle cx="11.5" cy="4.5" r="0.9"/><circle cx="4.5" cy="11.5" r="0.9"/><circle cx="11.5" cy="11.5" r="0.9"/></g></svg>
<!-- BOTTOM TABS -->
<div class="a" style="left:531px;top:516.5px;width:827.5px;height:196.5px;background:#f9f9f9"></div>
<div class="a" style="left:598px;top:498.5px;width:321.5px;height:18.5px;background:#f0f0f0;border:1px solid #e3e3e3;border-bottom:0"></div>
<div class="a" style="left:707px;top:498.5px;width:1px;height:18px;background:#e3e3e3"></div>
<div class="a" style="left:531.5px;top:497px;width:66.5px;height:20px;background:#f9f9f9"></div>
<div class="t" style="left:538.5px;top:500.2px">Calibración</div>
<div class="t" style="left:602px;top:502px">Resultado de lectura</div>
<div class="t" style="left:713.5px;top:502px;font-size:10.6px">Resultados de lectura de múltiples códigos</div>
<!-- chart -->
<div class="a" style="left:538px;top:521px;width:411px;height:187px;border:1px solid #646464;background:linear-gradient(#fff,#f0f0f0 20%,#d2d2d2)"></div>
<div class="a" style="left:574px;top:542px;width:355px;height:131px;border:1px solid #000;background:#fff"></div>
<div class="a" style="left:576px;top:568px;width:352px;height:1px;background:repeating-linear-gradient(90deg,#000 0 1px,transparent 1px 2px)"></div>
<div class="a" style="left:576px;top:594px;width:352px;height:1px;background:repeating-linear-gradient(90deg,#000 0 1px,transparent 1px 2px)"></div>
<div class="a" style="left:576px;top:620px;width:352px;height:1px;background:repeating-linear-gradient(90deg,#000 0 1px,transparent 1px 2px)"></div>
<div class="a" style="left:576px;top:646px;width:352px;height:1px;background:repeating-linear-gradient(90deg,#000 0 1px,transparent 1px 2px)"></div>
<div class="a" style="left:622px;top:544px;width:1px;height:128px;background:repeating-linear-gradient(180deg,#000 0 1px,transparent 1px 2px)"></div>
<div class="a" style="left:670px;top:544px;width:1px;height:128px;background:repeating-linear-gradient(180deg,#000 0 1px,transparent 1px 2px)"></div>
<div class="a" style="left:718px;top:544px;width:1px;height:128px;background:repeating-linear-gradient(180deg,#000 0 1px,transparent 1px 2px)"></div>
<div class="a" style="left:766px;top:544px;width:1px;height:128px;background:repeating-linear-gradient(180deg,#000 0 1px,transparent 1px 2px)"></div>
<div class="a" style="left:814px;top:544px;width:1px;height:128px;background:repeating-linear-gradient(180deg,#000 0 1px,transparent 1px 2px)"></div>
<div class="a" style="left:863px;top:544px;width:1px;height:128px;background:repeating-linear-gradient(180deg,#000 0 1px,transparent 1px 2px)"></div>
<div class="a" style="left:911px;top:544px;width:1px;height:128px;background:repeating-linear-gradient(180deg,#000 0 1px,transparent 1px 2px)"></div>
<div class="t" style="left:520px;top:535.5px;width:51px;text-align:right">100</div>
<div class="t" style="left:520px;top:561.5px;width:51px;text-align:right">80</div>
<div class="t" style="left:520px;top:587.5px;width:51px;text-align:right">60</div>
<div class="t" style="left:520px;top:613.5px;width:51px;text-align:right">40</div>
<div class="t" style="left:520px;top:639.5px;width:51px;text-align:right">20</div>
<div class="t" style="left:520px;top:665.5px;width:51px;text-align:right">0</div>
<div class="t" style="left:554px;top:674.5px;width:40px;text-align:center">0</div>
<div class="t" style="left:602px;top:674.5px;width:40px;text-align:center">25</div>
<div class="t" style="left:650px;top:674.5px;width:40px;text-align:center">50</div>
<div class="t" style="left:698px;top:674.5px;width:40px;text-align:center">75</div>
<div class="t" style="left:746px;top:674.5px;width:40px;text-align:center">100</div>
<div class="t" style="left:794px;top:674.5px;width:40px;text-align:center">125</div>
<div class="t" style="left:842px;top:674.5px;width:40px;text-align:center">150</div>
<div class="t" style="left:891px;top:674.5px;width:40px;text-align:center">175</div>
<div class="t" style="left:731px;top:692.5px">Brillo</div>
<div class="t" style="left:493.7px;top:611px;width:106px;text-align:center;transform:rotate(-90deg);font-size:10.9px">Nivel de coincidencia</div>

<!-- TABLE -->
<div class="a" style="left:953px;top:521px;width:401px;height:187px;border:1px solid #555;background:#f0f0f0;overflow:hidden">
<div class="a" style="left:0;top:0;width:400px;height:20px;background:#a7b6cf;border-bottom:1px solid #8595b0"></div>
<div class="a" style="left:162px;top:0;width:74px;height:20px;background:#f0b27a;border-bottom:1px solid #c09070"></div>
<div class="a" style="left:161.5px;top:0;width:1px;height:20px;background:#8898b0"></div>
<div class="a" style="left:236px;top:0;width:1px;height:20px;background:#8898b0"></div>
<div class="a" style="left:311.5px;top:0;width:1px;height:20px;background:#8898b0"></div>
<div class="a" style="left:386.5px;top:0;width:1px;height:20px;background:#8898b0"></div>
<div class="a" style="left:0;top:20px;width:162px;height:140px;background:#f4f6fb"></div>
<div class="a" style="left:0;top:20px;width:162px;height:20px;background:#8cb4f8;border-bottom:1px solid #2a6ad8;border-right:1px solid #2a6ad8"></div>
<div class="a" style="left:162px;top:20px;width:74px;height:140px;background:#8cb4fa"></div>
<div class="a" style="left:236px;top:20px;width:164px;height:140px;background:#fff"></div>
<div class="a" style="left:0;top:39px;width:162px;height:1px;background:#8aa0bc"></div>
<div class="a" style="left:162px;top:39px;width:74px;height:1px;background:#eef3ff"></div>
<div class="a" style="left:236px;top:39px;width:164px;height:1px;background:#ececec"></div>
<div class="a" style="left:0;top:59px;width:162px;height:1px;background:#8aa0bc"></div>
<div class="a" style="left:162px;top:59px;width:74px;height:1px;background:#eef3ff"></div>
<div class="a" style="left:236px;top:59px;width:164px;height:1px;background:#ececec"></div>
<div class="a" style="left:0;top:79px;width:162px;height:1px;background:#8aa0bc"></div>
<div class="a" style="left:162px;top:79px;width:74px;height:1px;background:#eef3ff"></div>
<div class="a" style="left:236px;top:79px;width:164px;height:1px;background:#ececec"></div>
<div class="a" style="left:0;top:99px;width:162px;height:1px;background:#8aa0bc"></div>
<div class="a" style="left:162px;top:99px;width:74px;height:1px;background:#eef3ff"></div>
<div class="a" style="left:236px;top:99px;width:164px;height:1px;background:#ececec"></div>
<div class="a" style="left:0;top:119px;width:162px;height:1px;background:#8aa0bc"></div>
<div class="a" style="left:162px;top:119px;width:74px;height:1px;background:#eef3ff"></div>
<div class="a" style="left:236px;top:119px;width:164px;height:1px;background:#ececec"></div>
<div class="a" style="left:0;top:139px;width:162px;height:1px;background:#8aa0bc"></div>
<div class="a" style="left:162px;top:139px;width:74px;height:1px;background:#eef3ff"></div>
<div class="a" style="left:236px;top:139px;width:164px;height:1px;background:#ececec"></div>
<div class="a" style="left:0;top:159px;width:162px;height:1px;background:#6a8ab8"></div>
<div class="a" style="left:161.5px;top:20px;width:1px;height:140px;background:#2a6ad8"></div>
<div class="a" style="left:236px;top:20px;width:1px;height:140px;background:#ececec"></div>
<div class="a" style="left:311.5px;top:20px;width:1px;height:140px;background:#ececec"></div>
<div class="a" style="left:386.5px;top:20px;width:1px;height:140px;background:#ececec"></div>
<div class="a" style="left:0;top:160px;width:400px;height:8px;background:#ababab;border-top:1px solid #777"></div>
<div class="a" style="left:0;top:168px;width:400px;height:1px;background:#fff"></div>
<div class="a" style="left:17.5px;top:177px;width:107px;height:2px;background:#808080"></div>
<div class="t" style="left:4px;top:4px">Elemento</div>
<div class="t" style="left:159px;top:4px;width:80px;text-align:center"><b style="color:#0a0af0;font-family:Liberation Sans;letter-spacing:0.3px">Banco1</b></div>
<div class="t" style="left:234px;top:4px;width:80px;text-align:center">Banco2</div>
<div class="t" style="left:309px;top:4px;width:80px;text-align:center">Banco3</div>
<div class="t" style="left:4px;top:24px">Alternar</div>
<div class="t" style="left:159px;top:24px;width:80px;text-align:center">Habilitar</div>
<div class="t" style="left:234px;top:24px;width:80px;text-align:center">Desactivar</div>
<div class="t" style="left:309px;top:24px;width:80px;text-align:center">Desactivar</div>
<div class="t" style="left:384px;top:24px;width:80px;text-align:center">Desactivar</div>
<div class="t" style="left:4px;top:44px">Simbología</div>
<div class="t" style="left:159px;top:44px;width:80px;text-align:center">ITF</div>
<div class="t" style="left:234px;top:44px;width:80px;text-align:center">QR,DataM...</div>
<div class="t" style="left:309px;top:44px;width:80px;text-align:center">QR,DataM...</div>
<div class="t" style="left:384px;top:44px;width:80px;text-align:center">QR,DataM...</div>
<div class="t" style="left:4px;top:64px">Filtro polarizador</div>
<div class="t" style="left:159px;top:64px;width:80px;text-align:center">Habilitar</div>
<div class="t" style="left:234px;top:64px;width:80px;text-align:center">Desactivar</div>
<div class="t" style="left:309px;top:64px;width:80px;text-align:center">Desactivar</div>
<div class="t" style="left:384px;top:64px;width:80px;text-align:center">Desactivar</div>
<div class="t" style="left:4px;top:84px">Exposición (us)</div>
<div class="t" style="left:159px;top:84px;width:80px;text-align:center">4478</div>
<div class="t" style="left:234px;top:84px;width:80px;text-align:center">15</div>
<div class="t" style="left:309px;top:84px;width:80px;text-align:center">15</div>
<div class="t" style="left:384px;top:84px;width:80px;text-align:center">15</div>
<div class="t" style="left:4px;top:104px">Ganancia</div>
<div class="t" style="left:159px;top:104px;width:80px;text-align:center">28</div>
<div class="t" style="left:234px;top:104px;width:80px;text-align:center">0</div>
<div class="t" style="left:309px;top:104px;width:80px;text-align:center">0</div>
<div class="t" style="left:384px;top:104px;width:80px;text-align:center">0</div>
<div class="t" style="left:4px;top:124px">Método de ajuste de contraste</div>
<div class="t" style="left:159px;top:124px;width:80px;text-align:center">HDR</div>
<div class="t" style="left:234px;top:124px;width:80px;text-align:center">HDR</div>
<div class="t" style="left:309px;top:124px;width:80px;text-align:center">HDR</div>
<div class="t" style="left:384px;top:124px;width:80px;text-align:center">HDR</div>
<div class="t" style="left:4px;top:144px">Filtro de imagen</div>
<div class="t" style="left:159px;top:144px;width:80px;text-align:center">Desactivar</div>
<div class="t" style="left:234px;top:144px;width:80px;text-align:center">Desactivar</div>
<div class="t" style="left:309px;top:144px;width:80px;text-align:center">Desactivar</div>
<div class="t" style="left:384px;top:144px;width:80px;text-align:center">Desactivar</div>
</div>

</body></html>
